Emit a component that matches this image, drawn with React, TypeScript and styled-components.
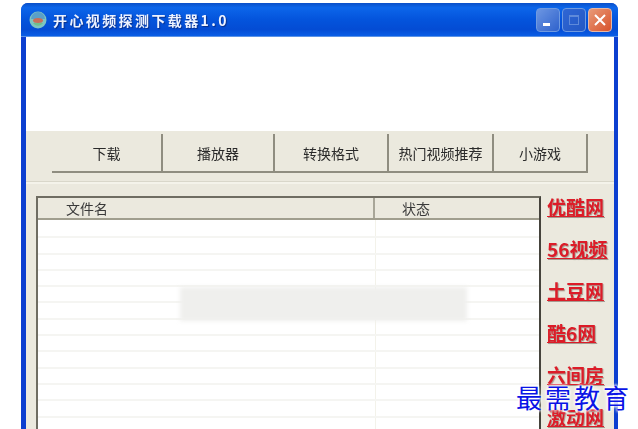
import styled, { createGlobalStyle } from "styled-components";

const columns = ["文件名", "状态"];
const tools = [
  { label: "下载", width: 111 },
  { label: "播放器", width: 112 },
  { label: "转换格式", width: 114 },
  { label: "热门视频推荐", width: 105 },
  { label: "小游戏", width: 94 },
];
const sites = ["优酷网", "56视频", "土豆网", "酷6网", "六间房", "激动网"];
const rows = Array.from({ length: 14 }, (_, i) => i);

const GlobalStyle = createGlobalStyle`
  html, body {
    margin: 0;
    height: 429px;
    overflow: hidden;
    background: #fff;
  }
`;

const Page = styled.div`
  position: relative;
  width: 638px;
  height: 429px;
  overflow: hidden;
  box-sizing: border-box;
  padding: 3px 20px 0 21px;
  font-family: "Noto Sans CJK SC", "Liberation Sans", sans-serif;
`;

const Window = styled.div`
  width: 597px;
  height: 470px;
  border-radius: 7px 7px 0 0;
  background: #0c3fd0;
  overflow: hidden;
  filter: blur(0.5px);
`;

const TitleBar = styled.div`
  height: 34px;
  box-sizing: border-box;
  padding: 0 6px 0 8px;
  display: flex;
  align-items: center;
  background: linear-gradient(180deg, #0a4fc8 0%, #0c66ea 14%, #0454dc 50%, #044cd4 80%, #0a5ee6 100%);
  border-bottom: 1px solid #5b93e6;
`;

const AppIcon = styled.svg`
  width: 18px;
  height: 18px;
  flex: none;
`;

const Title = styled.div`
  margin-left: 6px;
  flex: 1;
  color: #eef3ff;
  font-size: 14px;
  font-weight: 700;
  letter-spacing: 2.4px;
  line-height: 18px;
  text-shadow: 1px 1px 1px #0a2f8a;
`;

const Controls = styled.div`
  display: flex;
  gap: 2px;
`;

const Control = styled.div<{ $tone: "blue" | "dim" | "red" }>`
  width: 24px;
  height: 24px;
  box-sizing: border-box;
  border-radius: 4px;
  border: 1px solid ${(p) => (p.$tone === "red" ? "#e6b7a4" : "#6f9ae0")};
  background: ${(p) =>
    p.$tone === "red"
      ? "linear-gradient(135deg, #e89a78, #d8532c)"
      : p.$tone === "dim"
        ? "linear-gradient(135deg, #2f66d4, #2458c4)"
        : "linear-gradient(135deg, #6c96e2, #2f62cc)"};
  display: flex;
  align-items: center;
  justify-content: center;
`;

const Body = styled.div`
  margin: 0 4px 0 5px;
  height: 440px;
  background: #ebe9de;
`;

const Banner = styled.div`
  height: 94px;
  background: #fff;
`;

const Toolbar = styled.div`
  height: 53px;
  box-sizing: border-box;
  padding: 3px 0 0 26px;
  border-bottom: 2px solid #f4f3ea;
  box-shadow: inset 0 -1px 0 #d9d7ca;
  display: flex;
  align-items: flex-start;
`;

const ToolButton = styled.div<{ $width: number }>`
  width: ${(p) => p.$width}px;
  height: 39px;
  flex: none;
  box-sizing: border-box;
  background: #ebe9de;
  border-right: 2px solid #8f8d80;
  border-bottom: 2px solid #8f8d80;
  display: flex;
  align-items: center;
  justify-content: center;
  font-size: 14px;
  line-height: 18px;
  color: #2a2a2a;
`;

const Main = styled.div`
  padding: 12px 0 0 10px;
  display: flex;
  align-items: flex-start;
`;

const ListView = styled.div`
  width: 505px;
  height: 300px;
  flex: none;
  box-sizing: border-box;
  border-top: 2px solid #6f6d62;
  border-left: 2px solid #6f6d62;
  border-right: 2px solid #45433c;
  background: #fff;
`;

const HeaderRow = styled.div`
  height: 22px;
  box-sizing: border-box;
  background: #ebe9de;
  border-bottom: 2px solid #a09e8e;
  display: flex;
`;

const HeaderCell = styled.div<{ $first: boolean }>`
  box-sizing: border-box;
  width: ${(p) => (p.$first ? "337px" : "164px")};
  padding-left: ${(p) => (p.$first ? "28px" : "27px")};
  border-right: ${(p) => (p.$first ? "2px solid #a8a698" : "none")};
  font-size: 14px;
  line-height: 21px;
  color: #3a3a3a;
`;

const RowList = styled.div`
  padding-top: 2px;
  background: linear-gradient(90deg, transparent 337px, #f3f2ea 337px, #f3f2ea 338px, transparent 338px);
`;

const Row = styled.div`
  height: 16.3px;
  box-sizing: border-box;
  border-bottom: 2px solid #f5f5f2;
`;

const SiteList = styled.div`
  margin-left: 6px;
  margin-top: -1px;
  display: flex;
  flex-direction: column;
  gap: 18px;
`;

const SiteLink = styled.a`
  display: block;
  height: 24px;
  color: #dc1c28;
  font-size: 19px;
  font-weight: 700;
  line-height: 24px;
  white-space: nowrap;
  text-decoration: underline;
  text-shadow: 1px 1px 1px #a89a90;
`;

const BlurPatch = styled.div`
  position: absolute;
  left: 180px;
  top: 287px;
  width: 287px;
  height: 34px;
  background: #efefed;
  filter: blur(2px);
`;

const Watermark = styled.div`
  position: absolute;
  left: 516px;
  top: 381px;
  color: #0a14e6;
  font-family: "Noto Sans CJK SC", serif;
  font-size: 26px;
  font-weight: 400;
  letter-spacing: 3px;
  line-height: 32px;
  white-space: nowrap;
  text-shadow: 0 0 3px #fff, 0 0 3px #fff, 0 0 3px #fff, 0 0 4px #fff;
`;

export default function App() {
  return (
    <Page>
      <GlobalStyle />
      <Window>
        <TitleBar>
          <AppIcon viewBox="0 0 18 18">
            <circle cx="9" cy="9" r="8.5" fill="#7fc4c0" />
            <path d="M2 8a7 7 0 0 1 14 0z" fill="#5aa0c8" />
            <ellipse cx="9" cy="9.5" rx="5" ry="2.5" fill="#c8705a" />
            <path d="M4 12a6 6 0 0 0 10 0z" fill="#6fc08c" />
          </AppIcon>
          <Title>开心视频探测下载器1.0</Title>
          <Controls>
            <Control $tone="blue">
              <svg width="14" height="14" viewBox="0 0 14 14">
                <rect x="2" y="10" width="7" height="3" fill="#fff" />
              </svg>
            </Control>
            <Control $tone="dim">
              <svg width="14" height="14" viewBox="0 0 14 14">
                <rect x="2.5" y="2.5" width="9" height="9" fill="none" stroke="#5f8ada" strokeWidth="1" />
                <rect x="2" y="2" width="10" height="2" fill="#5f8ada" />
              </svg>
            </Control>
            <Control $tone="red">
              <svg width="16" height="16" viewBox="0 0 16 16">
                <path d="M3 3l10 10M13 3L3 13" stroke="#fff" strokeWidth="2" />
              </svg>
            </Control>
          </Controls>
        </TitleBar>
        <Body>
          <Banner />
          <Toolbar>
            {tools.map((tool) => (
              <ToolButton key={tool.label} $width={tool.width}>
                {tool.label}
              </ToolButton>
            ))}
          </Toolbar>
          <Main>
            <ListView>
              <HeaderRow>
                {columns.map((col, i) => (
                  <HeaderCell key={col} $first={i === 0}>
                    {col}
                  </HeaderCell>
                ))}
              </HeaderRow>
              <RowList>
                {rows.map((row) => (
                  <Row key={row} />
                ))}
              </RowList>
            </ListView>
            <SiteList>
              {sites.map((site) => (
                <SiteLink key={site}>{site}</SiteLink>
              ))}
            </SiteList>
          </Main>
        </Body>
      </Window>
      <BlurPatch />
      <Watermark>最需教育</Watermark>
    </Page>
  );
}
